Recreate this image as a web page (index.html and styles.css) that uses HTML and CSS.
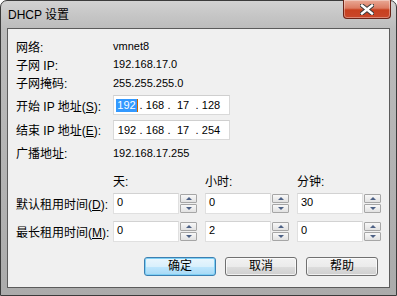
FILE: index.html
```html
<!DOCTYPE html>
<html lang="zh-CN">
<head>
  <meta charset="UTF-8">
  <title>DHCP 设置</title>
  <link rel="stylesheet" href="styles.css">
</head>
<body>
  <div class="window">
    <div class="titlebar">
      <span class="title">DHCP 设置</span>
      <div class="close">
        <svg width="14" height="11" viewBox="0 0 14 11">
          <path d="M2 1.5 L12 9.5 M12 1.5 L2 9.5" stroke="#3a3a3a" stroke-width="4.4" stroke-linecap="square"/>
          <path d="M2 1.5 L12 9.5 M12 1.5 L2 9.5" stroke="#ffffff" stroke-width="2.4" stroke-linecap="square"/>
        </svg>
      </div>
    </div>

    <div class="client">
      <div class="fields">
        <div class="row h18"><span class="label">网络:</span><span class="value">vmnet8</span></div>
        <div class="row h18"><span class="label">子网 IP:</span><span class="value">192.168.17.0</span></div>
        <div class="row h19"><span class="label">子网掩码:</span><span class="value">255.255.255.0</span></div>
        <div class="row h26">
          <span class="label">开始 IP 地址(<u>S</u>):</span>
          <div class="ipbox">
            <span class="oct"><span class="sel">192</span><span class="caret"></span></span><span class="dot">.</span>
            <span class="oct">168</span><span class="dot">.</span>
            <span class="oct">17</span><span class="dot">.</span>
            <span class="oct">128</span>
          </div>
        </div>
        <div class="row h23">
          <span class="label">结束 IP 地址(<u>E</u>):</span>
          <div class="ipbox">
            <span class="oct">192</span><span class="dot">.</span>
            <span class="oct">168</span><span class="dot">.</span>
            <span class="oct">17</span><span class="dot">.</span>
            <span class="oct">254</span>
          </div>
        </div>
        <div class="row h23"><span class="label">广播地址:</span><span class="value">192.168.17.255</span></div>
      </div>

      <div class="lease">
        <span></span><span class="head">天:</span><span class="head">小时:</span><span class="head">分钟:</span>

        <span class="label">默认租用时间(<u>D</u>):</span>
        <div class="spin"><div class="edit">0</div><div class="arrows"><span class="up"></span><span class="down"></span></div></div>
        <div class="spin"><div class="edit">0</div><div class="arrows"><span class="up"></span><span class="down"></span></div></div>
        <div class="spin"><div class="edit">30</div><div class="arrows"><span class="up"></span><span class="down"></span></div></div>

        <span class="label last">最长租用时间(<u>M</u>):</span>
        <div class="spin last"><div class="edit">0</div><div class="arrows"><span class="up"></span><span class="down"></span></div></div>
        <div class="spin last"><div class="edit">2</div><div class="arrows"><span class="up"></span><span class="down"></span></div></div>
        <div class="spin last"><div class="edit">0</div><div class="arrows"><span class="up"></span><span class="down"></span></div></div>
      </div>

      <div class="buttons">
        <button class="btn default">确定</button>
        <button class="btn">取消</button>
        <button class="btn">帮助</button>
      </div>
    </div>
  </div>
</body>
</html>
```

FILE: styles.css
```css
html, body {
  margin: 0;
  padding: 0;
  background: #ffffff;
}
body {
  font-family: "Liberation Sans", "Noto Sans CJK SC", sans-serif;
  font-size: 12px;
  color: #000000;
}
.window {
  width: 397px;
  height: 296px;
  box-sizing: border-box;
  border: 1px solid #3b3b3b;
  border-radius: 7px 7px 0 0;
  background: linear-gradient(to bottom, #d2d2d2 0px, #c6c6c6 14px, #bcbcbc 28px, #ababab 296px);
  padding: 0 6px 7px 6px;
  display: flex;
  flex-direction: column;
}
.titlebar {
  height: 27px;
  display: flex;
  align-items: flex-start;
}
.title {
  padding: 6px 0 0 1px;
  line-height: 16px;
  font-size: 12px;
  color: #000;
}
.close {
  margin-left: auto;
  margin-right: -1px;
  margin-top: -1px;
  width: 46px;
  height: 18px;
  border: 1px solid #6b2418;
  border-top: none;
  border-radius: 0 0 4px 4px;
  background: linear-gradient(to bottom, #e9a996 0%, #dc7c62 45%, #c8401f 55%, #c9472a 100%);
  display: flex;
  align-items: center;
  justify-content: center;
  box-shadow: inset 0 0 0 1px rgba(255,255,255,0.35);
}
.client {
  flex: 1;
  background: #f0f0f0;
  border: 1px solid #5b5b5b;
  padding: 8px 11px 0 8px;
}
.row {
  display: flex;
  align-items: center;
}
.h18 { height: 18px; }
.h19 { height: 19px; }
.h23 { height: 23px; }
.h26 { height: 26px; }
.label {
  width: 97px;
  flex: none;
  white-space: nowrap;
  font-size: 12px;
}
.value {
  font-size: 11px;
}
.ipbox {
  width: 113px;
  height: 18px;
  background: #ffffff;
  border: 1px solid #d9d9d9;
  border-top-color: #cfcfcf;
  padding-left: 2px;
  display: flex;
  align-items: center;
  font-size: 11px;
}
.oct {
  width: 22px;
  display: flex;
  justify-content: center;
  align-items: center;
}
.dot {
  width: 6px;
  text-align: center;
}
.sel {
  background: #3399ff;
  color: #ffffff;
  padding: 0 1px;
  line-height: 13px;
}
.caret {
  width: 1px;
  height: 13px;
  background: #c86400;
}
/* lease time grid: label + day / hour / minute */
.lease {
  display: grid;
  grid-template-columns: 89px 84px 84px 84px;
  grid-template-rows: 18px 21px 28px;
  column-gap: 8px;
  padding-top: 11px;
  align-items: center;
}
.lease .head {
  align-self: start;
  line-height: 14px;
}
.lease .label {
  width: auto;
}
.lease .last {
  margin-top: 7px;
}
.spin {
  height: 21px;
  display: flex;
}
.spin .edit {
  flex: 1;
  background: #ffffff;
  border: 1px solid #e0e0e0;
  border-top-color: #d2d2d2;
  font-size: 11px;
  padding: 2px 0 0 3px;
  line-height: 12px;
}
.arrows {
  width: 17px;
  display: flex;
  flex-direction: column;
  gap: 1px;
  padding-top: 1px;
  margin-left: 1px;
}
.arrows span {
  height: 9px;
  box-sizing: border-box;
  border: 1px solid #a6a6a6;
  border-radius: 1px;
  background: linear-gradient(to bottom, #f8f8f8, #e2e2e2);
  display: flex;
  align-items: center;
  justify-content: center;
}
.arrows .up::after {
  content: "";
  border-left: 3px solid transparent;
  border-right: 3px solid transparent;
  border-bottom: 3px solid #4d6185;
}
.arrows .down::after {
  content: "";
  border-left: 3px solid transparent;
  border-right: 3px solid transparent;
  border-top: 3px solid #4d6185;
}
.buttons {
  display: flex;
  justify-content: flex-end;
  gap: 9px;
  margin-top: 15px;
}
.btn {
  width: 72px;
  height: 19px;
  padding: 0;
  border: 1px solid #707070;
  border-radius: 3px;
  background: linear-gradient(to bottom, #f2f2f2 0%, #ebebeb 50%, #dddddd 51%, #cfcfcf 100%);
  font-family: "Liberation Sans", "Noto Sans CJK SC", sans-serif;
  font-size: 12px;
  line-height: 17px;
  color: #000;
  box-shadow: inset 0 0 0 1px rgba(255,255,255,0.7);
}
.btn.default {
  border-color: #3c7fb1;
  background: linear-gradient(to bottom, #eaf6fd 0%, #d9f0fc 50%, #bee6fd 51%, #a7d9f5 100%);
  box-shadow: inset 0 0 0 1px #7fd0f5;
}
```
